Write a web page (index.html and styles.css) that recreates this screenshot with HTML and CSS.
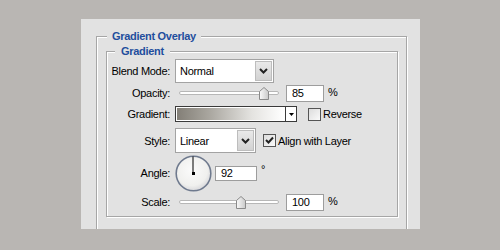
FILE: index.html
```html
<!DOCTYPE html>
<html>
<head>
<meta charset="utf-8">
<link rel="stylesheet" href="styles.css">
</head>
<body>
<div class="panel">
  <fieldset class="group outer">
    <legend class="legend legend-outer">Gradient Overlay</legend>
    <fieldset class="group inner">
      <legend class="legend legend-inner">Gradient</legend>
      <div class="form">
        <div class="label">Blend Mode:</div>
        <div class="ctrl">
          <div class="select select-blend">
            <span class="select-text">Normal</span>
            <span class="select-btn"><svg width="9" height="6" viewBox="0 0 9 6"><path d="M1 1 L4.5 4.5 L8 1" fill="none" stroke="#222" stroke-width="2"/></svg></span>
          </div>
        </div>

        <div class="label">Opacity:</div>
        <div class="ctrl">
          <div class="slider">
            <div class="track"></div>
            <svg class="thumb" style="left:80px" width="10" height="13" viewBox="0 0 10 13"><defs><linearGradient id="tg1" x1="0" y1="0" x2="1" y2="0"><stop offset="0" stop-color="#fafafa"/><stop offset="1" stop-color="#c9c9c9"/></linearGradient></defs><path d="M0.5 12.5 V4.5 L5 0.5 L9.5 4.5 V12.5 Z" fill="url(#tg1)" stroke="#8a8a8a"/></svg>
          </div>
          <div class="input input-num">85</div>
          <span class="unit">%</span>
        </div>

        <div class="label">Gradient:</div>
        <div class="ctrl">
          <div class="gradient">
            <div class="gradient-fill"></div>
            <div class="gradient-btn"><svg width="5" height="3" viewBox="0 0 5 3"><path d="M0 0 H5 L2.5 3 Z" fill="#000"/></svg></div>
          </div>
          <span class="check check-plain"></span>
          <span class="check-label">Reverse</span>
        </div>

        <div class="label">Style:</div>
        <div class="ctrl">
          <div class="select select-style">
            <span class="select-text">Linear</span>
            <span class="select-btn"><svg width="9" height="6" viewBox="0 0 9 6"><path d="M1 1 L4.5 4.5 L8 1" fill="none" stroke="#222" stroke-width="2"/></svg></span>
          </div>
          <span class="check check-on"><svg width="9" height="9" viewBox="0 0 9 9"><path d="M1 4 L3.5 6.5 L8 1.5" fill="none" stroke="#222" stroke-width="2"/></svg></span>
          <span class="check-label">Align with Layer</span>
        </div>

        <div class="label">Angle:</div>
        <div class="ctrl">
          <svg class="dial" width="37" height="37" viewBox="0 0 37 37">
            <defs><radialGradient id="dg" cx="0.45" cy="0.4" r="0.6"><stop offset="0" stop-color="#fbfbfb"/><stop offset="0.75" stop-color="#f0f0ee"/><stop offset="1" stop-color="#d9d9dc"/></radialGradient></defs>
            <circle cx="18.5" cy="18.5" r="17.3" fill="url(#dg)" stroke="#6f7a8e" stroke-width="1.6"/>
            <line x1="18" y1="1.5" x2="18" y2="18.5" stroke="#000" stroke-width="1"/>
            <rect x="17" y="17" width="3" height="3" fill="#000"/>
          </svg>
          <div class="input input-angle">92</div>
          <span class="unit deg">°</span>
        </div>

        <div class="label">Scale:</div>
        <div class="ctrl">
          <div class="slider">
            <div class="track"></div>
            <svg class="thumb" style="left:57px" width="10" height="13" viewBox="0 0 10 13"><defs><linearGradient id="tg2" x1="0" y1="0" x2="1" y2="0"><stop offset="0" stop-color="#fafafa"/><stop offset="1" stop-color="#c9c9c9"/></linearGradient></defs><path d="M0.5 12.5 V4.5 L5 0.5 L9.5 4.5 V12.5 Z" fill="url(#tg2)" stroke="#8a8a8a"/></svg>
          </div>
          <div class="input input-num">100</div>
          <span class="unit">%</span>
        </div>
      </div>
    </fieldset>
  </fieldset>
</div>
</body>
</html>
```

FILE: styles.css
```css
html, body {
  margin: 0;
  padding: 0;
}
body {
  width: 500px;
  height: 250px;
  background: #b9b6b3;
  overflow: hidden;
  font-family: "Liberation Sans", Arial, sans-serif;
  font-size: 11px;
  letter-spacing: -0.3px;
  color: #000;
}
.panel {
  margin: 19px 0 0 81px;
  width: 339px;
  height: 210px;
  background: #e2e2e2;
  overflow: hidden;
  padding-top: 1px;
  box-sizing: border-box;
}
.group {
  margin: 0;
  border: 1px solid #a6a6a6;
  box-shadow: inset 1px 1px 0 #fff, 1px 1px 0 #fff;
  min-width: 0;
}
.outer {
  margin: 9px 13px 0 15px;
  padding: 1px 8px 0 9px;
  height: 260px;
}
.inner {
  padding: 0 0 3px 0;
}
.legend {
  font-weight: bold;
  color: #1f4e9d;
  line-height: 14px;
  background: #e2e2e2;
}
.legend-outer {
  padding: 0 5px;
  margin-left: 1px;
}
.legend-inner {
  padding: 0 6px;
  margin-left: 8px;
}
.form {
  display: grid;
  grid-template-columns: 63px 1fr;
  grid-template-rows: 26px 18px 24px 29px 36px 22px;
  column-gap: 5px;
  align-items: center;
}
.label {
  text-align: right;
}
.ctrl {
  display: flex;
  align-items: center;
  height: 100%;
}
.select {
  display: flex;
  align-items: stretch;
  box-sizing: border-box;
  background: #fff;
  border: 1px solid #a3a3a3;
}
.select-blend {
  width: 99px;
  height: 24px;
}
.select-style {
  width: 81px;
  height: 25px;
}
.select-text {
  flex: 1;
  padding-left: 4px;
  display: flex;
  align-items: center;
}
.select-btn {
  width: 15px;
  margin: 1px;
  background: linear-gradient(#e9e9e9, #d2d2d2);
  border: 1px solid #bdbdbd;
  display: flex;
  align-items: center;
  justify-content: center;
}
.slider {
  position: relative;
  width: 100px;
  height: 13px;
  margin-left: 4px;
  margin-right: 7px;
  display: flex;
  align-items: center;
}
.track {
  width: 100%;
  height: 2px;
  border: 1px solid #b7b7b7;
  border-radius: 2px;
  background: #fff;
}
.thumb {
  position: absolute;
  top: 0;
}
.input {
  box-sizing: border-box;
  background: #fff;
  border: 1px solid #9d9d9d;
  padding-left: 5px;
  display: flex;
  align-items: center;
}
.input-num {
  width: 38px;
  height: 17px;
}
.input-angle {
  width: 42px;
  height: 15px;
  margin-left: 3px;
}
.unit {
  margin-left: 4px;
  align-self: center;
  margin-top: -3px;
}
.deg {
  margin-top: -8px;
}
.gradient {
  display: flex;
  width: 122px;
  height: 16px;
  box-sizing: border-box;
  border: 1px solid #3a3a3a;
  background: #fff;
}
.gradient-fill {
  flex: 1;
  margin: 1px;
  background: linear-gradient(to right, #837f77, #a9a69f 30%, #e4e3e0 70%, #ffffff);
}
.gradient-btn {
  width: 10px;
  border-left: 1px solid #3a3a3a;
  display: flex;
  align-items: center;
  justify-content: center;
}
.check {
  box-sizing: border-box;
  width: 13px;
  height: 13px;
  border: 1px solid #555;
  background: linear-gradient(135deg, #dcdcdc, #fafafa);
  display: flex;
  align-items: center;
  justify-content: center;
}
.check-plain {
  margin-left: 11px;
}
.check-on {
  margin-left: 7px;
}
.check-label {
  margin-left: 2px;
}
.dial {
  display: block;
}
```
